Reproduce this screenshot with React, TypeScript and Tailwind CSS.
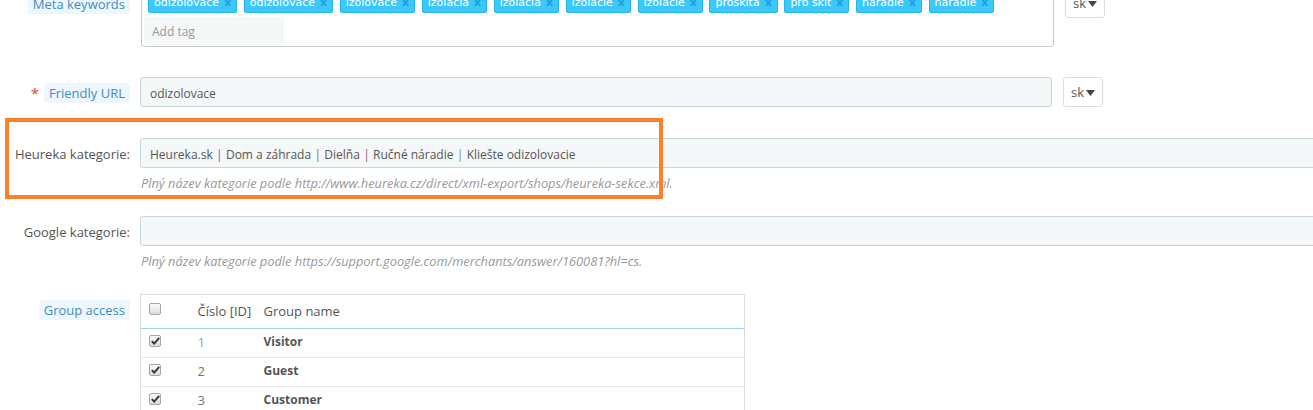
import React from 'react';

const TAGS = [
  'odizolovace',
  'odizolovace',
  'izolovace',
  'izolacia',
  'izolacia',
  'izolacie',
  'izolacie',
  'proskita',
  'pro skit',
  'naradie',
  'naradie',
];

const GROUPS = [
  { id: 1, name: 'Visitor', idClass: 'text-[#6ea8d2]' },
  { id: 2, name: 'Guest', idClass: 'text-[#777]' },
  { id: 3, name: 'Customer', idClass: 'text-[#777]' },
];

function LangButton() {
  return (
    <button className="ml-[11px] flex h-[30px] w-[40px] shrink-0 items-center justify-center gap-[2px] rounded-[3px] border border-[#ddd] bg-white pt-[2px] text-[13px] text-[#555]">
      sk
      <svg width="9" height="6" viewBox="0 0 9 6">
        <path d="M0 0h9L4.5 6z" fill="#444" />
      </svg>
    </button>
  );
}

function Chip({ children }: { children: React.ReactNode }) {
  return (
    <span className="rounded-[3px] bg-[#edf7fd] px-[5px] pt-[1px] text-[13px] leading-[19px] text-[#3f8dbf]">
      {children}
    </span>
  );
}

function Checkbox({ checked }: { checked?: boolean }) {
  return (
    <span className="relative inline-flex h-[12px] w-[12px] items-center justify-center rounded-[2px] border border-[#a6a6a6] bg-gradient-to-b from-[#fbfbfb] to-[#dcdcdc]">
      {checked && (
        <svg width="9" height="8" viewBox="0 0 9 8" className="absolute left-[1px] top-[1px]">
          <path d="M0.8 4.2 3.2 6.6 8.2 0.9" stroke="#333" strokeWidth="1.9" fill="none" />
        </svg>
      )}
    </span>
  );
}

function Pipe({ color = 'text-[#8e5a86]' }: { color?: string }) {
  return <span className={color}>|</span>;
}

export default function App() {
  return (
    <div
      className="relative h-[410px] w-[1313px] overflow-hidden bg-white text-[#555]"
      style={{ fontFamily: '"Open Sans", "Liberation Sans", sans-serif' }}
    >
      {/* Meta keywords */}
      <div className="-mt-[12px] flex items-start">
        <div className="flex w-[130px] shrink-0 justify-end pt-[6px]">
          <Chip>Meta keywords</Chip>
        </div>
        <div className="ml-[11px] w-[913px] rounded-[3px] border border-[#ccc] pb-[1px] pl-[2px] pt-[4px]">
          <div className="ml-[4px] flex gap-[6.6px]">
            {TAGS.map((t, i) => (
              <span
                key={i}
                className="flex h-[20px] items-center gap-[5px] rounded-[2px] border border-[#22b5ee] bg-[#3cc8fb] px-[5px] text-[11px] text-white"
                style={{ fontFamily: '"DejaVu Sans", Verdana, sans-serif' }}
              >
                {t}
                <span className="font-bold text-[#1b9fe2]">x</span>
              </span>
            ))}
          </div>
          <div className="mt-[4px] flex h-[28px] w-[140px] items-center rounded-[2px] bg-[#f5f8f9] px-[8px] pt-[2px] text-[12px] text-[#999]">
            Add tag
          </div>
        </div>
        <LangButton />
      </div>

      {/* Friendly URL */}
      <div className="mt-[30px] flex items-center">
        <div className="flex w-[130px] shrink-0 items-center justify-end gap-[5px] pt-[2px]">
          <span className="text-[15px] leading-none text-[#e0473d]">*</span>
          <Chip>Friendly URL</Chip>
        </div>
        <div className="ml-[10px] flex h-[30px] w-[912px] items-center rounded-[3px] border border-[#c7d6db] bg-[#f5f8f9] px-[9px] pt-[3px] text-[12px] text-[#555]">
          odizolovace
        </div>
        <LangButton />
      </div>

      {/* Heureka kategorie */}
      <div className="mt-[31px] flex items-center">
        <div className="w-[130px] shrink-0 pt-[3px] text-right text-[13px] text-[#555]">Heureka kategorie:</div>
        <div className="ml-[10px] flex h-[30px] w-[1200px] shrink-0 items-center gap-[3.3px] whitespace-pre rounded-[3px] border border-[#c7d6db] bg-[#f5f8f9] px-[9px] pt-[3px] text-[12px] text-[#555]">
          <span>Heureka.sk</span>
          <Pipe />
          <span>Dom a záhrada</span>
          <Pipe />
          <span>Dielňa</span>
          <Pipe />
          <span>Ručné náradie</span>
          <Pipe color="text-[#6f86b2]" />
          <span>Kliešte odizolovacie</span>
        </div>
      </div>
      <p className="ml-[141px] mt-[7px] text-[12.8px] italic leading-[16px] text-[#999]">
        Plný název kategorie podle http://www.heureka.cz/direct/xml-export/shops/heureka-sekce.xml.
      </p>

      {/* Google kategorie */}
      <div className="mt-[25px] flex items-center">
        <div className="w-[130px] shrink-0 pt-[3px] text-right text-[13px] text-[#555]">Google kategorie:</div>
        <div className="ml-[10px] h-[30px] w-[1200px] shrink-0 rounded-[3px] border border-[#c7d6db] bg-[#f5f8f9]" />
      </div>
      <p className="ml-[141px] mt-[7px] text-[12.8px] italic leading-[16px] text-[#999]">
        Plný název kategorie podle https://support.google.com/merchants/answer/160081?hl=cs.
      </p>

      {/* Group access */}
      <div className="mt-[25px] flex items-start">
        <div className="flex w-[130px] shrink-0 justify-end pt-[6px]">
          <Chip>Group access</Chip>
        </div>
        <table className="ml-[10px] w-[605px] border-collapse border border-[#ddd] text-[12px]">
          <thead>
            <tr className="h-[34px] border-b border-[#a3d4ef]">
              <th className="w-[57px] pl-[8px] text-left align-middle">
                <span className="-mt-[5px] flex">
                  <Checkbox />
                </span>
              </th>
              <th className="w-[66px] text-left text-[13px] font-normal text-[#555]">Číslo [ID]</th>
              <th className="text-left text-[13px] font-normal text-[#555]">Group name</th>
            </tr>
          </thead>
          <tbody>
            {GROUPS.map((g) => (
              <tr key={g.id} className="h-[29px] border-b border-[#e6e6e6]">
                <td className="pl-[8px] align-middle">
                  <span className="-mt-[4px] flex">
                    <Checkbox checked />
                  </span>
                </td>
                <td className={`text-[13px] ${g.idClass}`}>{g.id}</td>
                <td className="pb-[2px] font-bold text-[#555]">{g.name}</td>
              </tr>
            ))}
          </tbody>
        </table>
      </div>

      {/* Highlight annotation */}
      <div className="pointer-events-none absolute left-[5px] top-[118px] h-[81px] w-[658px] border-[4px] border-[#fd7f2c]" />
    </div>
  );
}
